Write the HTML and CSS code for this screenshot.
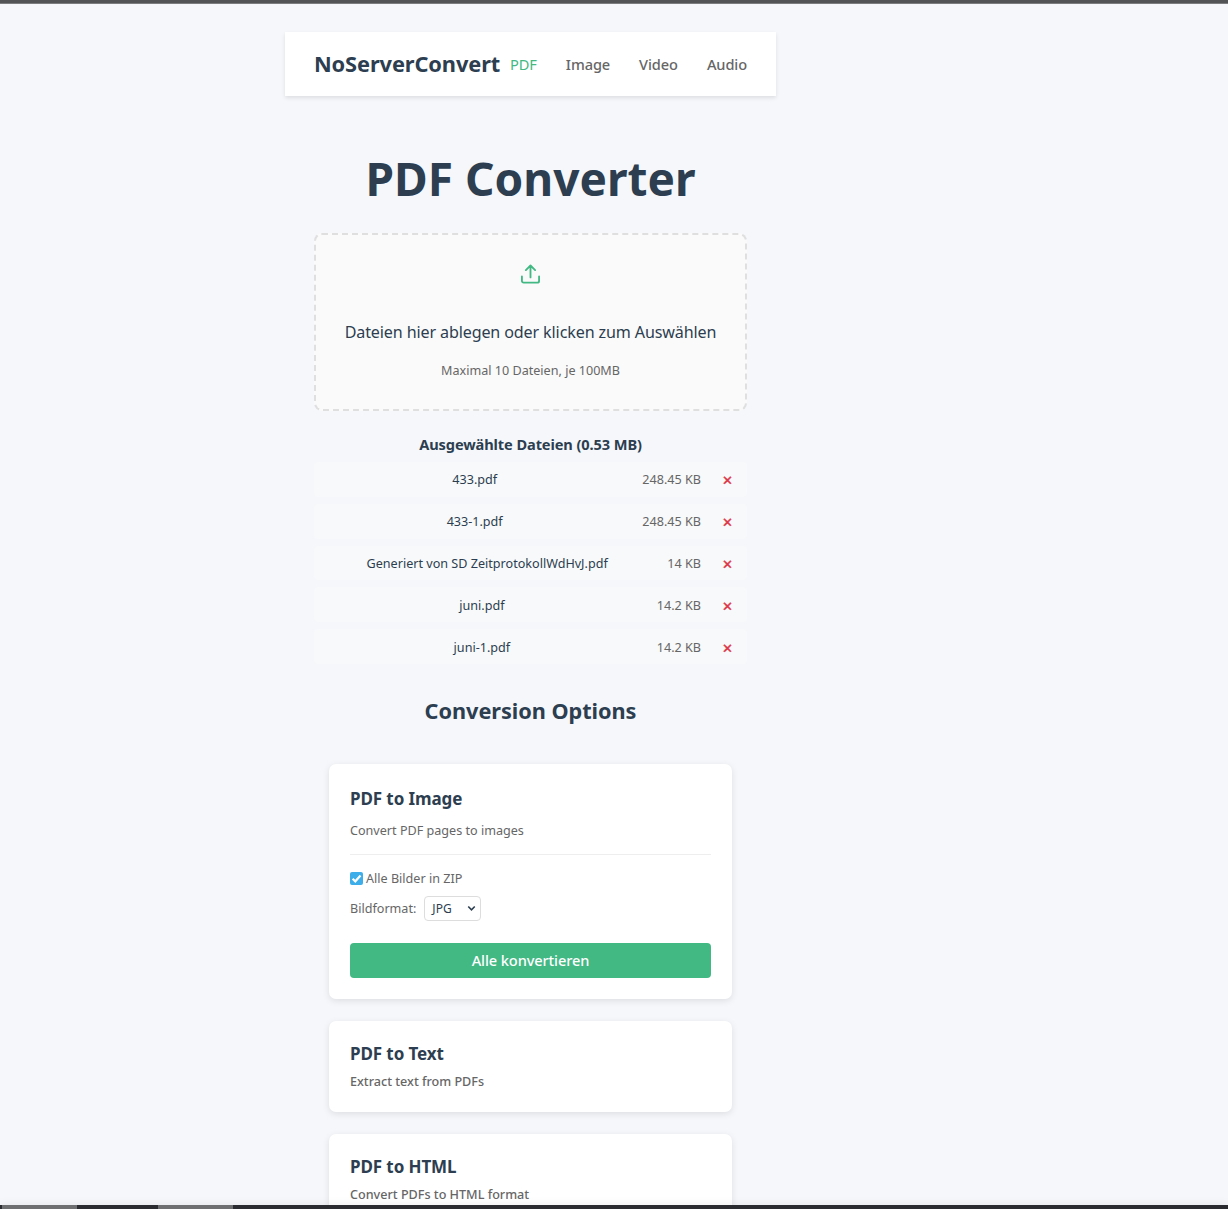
FILE: index.html
```html
<!DOCTYPE html>
<html lang="de">
<head>
<meta charset="utf-8">
<title>NoServerConvert</title>
<link rel="stylesheet" href="styles.css">
</head>
<body>
<div class="window-edge"></div>
<div class="app">
  <header class="navbar">
    <div class="brand">NoServerConvert</div>
    <nav class="links">
      <a class="link active">PDF</a>
      <a class="link">Image</a>
      <a class="link">Video</a>
      <a class="link">Audio</a>
    </nav>
  </header>
  <main class="content">
    <h1 class="title">PDF Converter</h1>
    <section class="dropzone">
      <svg class="upload" viewBox="0 0 24 24" fill="none" stroke="currentColor" stroke-width="2.1" stroke-linecap="round" stroke-linejoin="round"><path d="M2.2 14.3v5a2 2 0 0 0 2 2h15.6a2 2 0 0 0 2-2v-5"/><path d="M6.7 6.9 12 1.7l5.3 5.2M12 2.1v13.2"/></svg>
      <p class="drop-text">Dateien hier ablegen oder klicken zum Auswählen</p>
      <p class="drop-hint">Maximal 10 Dateien, je 100MB</p>
    </section>
    <h3 class="files-title">Ausgewählte Dateien (0.53 MB)</h3>
    <ul class="files">
      <li class="file"><span class="name">433.pdf</span><span class="size">248.45 KB</span><button class="remove">✕</button></li>
      <li class="file"><span class="name">433-1.pdf</span><span class="size">248.45 KB</span><button class="remove">✕</button></li>
      <li class="file"><span class="name">Generiert von SD ZeitprotokollWdHvJ.pdf</span><span class="size">14 KB</span><button class="remove">✕</button></li>
      <li class="file"><span class="name">juni.pdf</span><span class="size">14.2 KB</span><button class="remove">✕</button></li>
      <li class="file"><span class="name">juni-1.pdf</span><span class="size">14.2 KB</span><button class="remove">✕</button></li>
    </ul>
    <h2 class="options-title">Conversion Options</h2>
    <div class="cards">
      <article class="card card-open">
        <h3 class="card-title">PDF to Image</h3>
        <p class="card-desc">Convert PDF pages to images</p>
        <div class="settings">
          <label class="check-row">
            <span class="check"><svg viewBox="0 0 12 12" fill="none" stroke="#fff" stroke-width="2"><path d="M2.4 6.2 4.9 8.6 9.7 3.2"/></svg></span>
            Alle Bilder in ZIP
          </label>
          <label class="format-row">Bildformat:
            <span class="select">JPG<svg viewBox="0 0 10 8" fill="none" stroke="currentColor" stroke-width="1.8"><path d="M1.3 1.8 5 5.6 8.7 1.8"/></svg></span>
          </label>
          <button class="convert">Alle konvertieren</button>
        </div>
      </article>
      <article class="card">
        <h3 class="card-title">PDF to Text</h3>
        <p class="card-desc">Extract text from PDFs</p>
      </article>
      <article class="card">
        <h3 class="card-title">PDF to HTML</h3>
        <p class="card-desc">Convert PDFs to HTML format</p>
      </article>
    </div>
  </main>
</div>
<footer class="taskbar"><span class="task"></span><span class="task"></span></footer>
</body>
</html>
```
FILE: styles.css
```css
* { box-sizing: border-box; }
html, body { height: 100%; }
body {
  margin: 0;
  overflow: hidden;
  position: relative;
  background: #f5f7fb;
  color: #2c3e50;
  font-family: "Noto Sans", sans-serif;
}
h1, h2, h3, p, ul { margin: 0; padding: 0; }
button { font-family: inherit; border: 0; }
.window-edge { height: 4px; background: #535455; border-bottom: 1px solid #7c7d7f; }
.app { width: 491px; margin: 28px 0 0 285px; }
.navbar {
  height: 64px;
  padding: 0 29px 1px;
  display: flex;
  align-items: center;
  justify-content: space-between;
  background: #fff;
  box-shadow: 0 2px 4px rgba(0, 0, 0, .1);
}
.brand { font-size: 21.8px; letter-spacing: -.11px; font-weight: 700; }
.links { display: flex; gap: 29px; }
.link { font-size: 14.6px; letter-spacing: -.1px; font-weight: 500; color: #666; }
.link.active { color: #42b883; font-weight: 400; }
.content { padding: 0 29px; text-align: center; }
.title { margin-top: 49px; font-size: 46px; line-height: 66px; font-weight: 700; }
.dropzone {
  margin-top: 22px;
  height: 178px;
  padding-top: 29px;
  border: 2px dashed #dfdfdf;
  border-radius: 8px;
  background: #fafafa;
}
.upload { display: block; width: 21px; height: 21px; margin: 0 auto; color: #42b883; }
.drop-text { margin-top: 35px; font-size: 16.1px; letter-spacing: -.13px; line-height: 25px; white-space: nowrap; }
.drop-hint { margin-top: 15px; font-size: 12.6px; line-height: 22px; color: #666; }
.files-title { margin-top: 21px; font-size: 14.6px; letter-spacing: -.1px; line-height: 24px; font-weight: 700; }
.files { margin-top: 6px; list-style: none; display: flex; flex-direction: column; gap: 7px; }
.file {
  height: 34.8px;
  padding: 1px 14px 0;
  display: flex;
  align-items: center;
  background: #f8f9fa;
  border-radius: 4px;
  font-size: 12.6px;
}
.name { flex: 1; margin-right: 21px; }
.size { margin-right: 7px; color: #666; }
.remove { width: 25px; padding: 3px 0 0 13px; background: none; color: #dc3545; font-size: 12.6px; line-height: 18px; -webkit-text-stroke: .4px currentColor; }
.options-title { margin-top: 30px; font-size: 21.7px; letter-spacing: -.04px; line-height: 34px; font-weight: 700; }
.cards { margin-top: 36px; padding: 0 15px; display: flex; flex-direction: column; gap: 22px; text-align: left; }
.card {
  height: 91px;
  padding: 20px 21px 0;
  background: #fff;
  border-radius: 7px;
  box-shadow: 0 2px 7px rgba(0, 0, 0, .1);
}
.card-open { height: 235px; padding-top: 22px; }
.card-title { font-size: 17px; letter-spacing: -.1px; line-height: 26px; font-weight: 700; }
.card-desc { margin-top: 4px; font-size: 12.6px; line-height: 22px; font-weight: 500; color: #666; }
.card-open .card-desc { margin-top: 8px; font-weight: 400; }
.settings { margin-top: 12px; border-top: 1px solid #eee; font-size: 12.6px; color: #666; }
.check-row { display: flex; align-items: center; gap: 3px; margin-top: 13px; height: 22px; }
.check { width: 13px; height: 13px; border-radius: 2px; background: #3daee9; display: flex; }
.format-row { display: flex; align-items: center; gap: 8px; margin-top: 6px; height: 26px; }
.select {
  width: 57px;
  height: 25px;
  padding: 0 4px 0 7px;
  display: flex;
  align-items: center;
  justify-content: space-between;
  border: 1px solid #ddd;
  border-radius: 4px;
  color: #2c3e50;
  font-size: 12px;
}
.select svg { width: 9px; height: 7px; }
.convert {
  display: block;
  width: 100%;
  height: 35px;
  margin-top: 21px;
  padding: 0;
  border-radius: 4px;
  background: #42b883;
  color: #fff;
  font-size: 14.6px;
  letter-spacing: -.1px;
  font-weight: 500;
}
.taskbar {
  position: absolute;
  left: 0;
  right: 0;
  bottom: 0;
  height: 4px;
  padding-left: 2px;
  display: flex;
  gap: 81px;
  background: #2a2b31;
  box-shadow: 0 0 9px rgba(0, 0, 0, .12);
}
.task { width: 75px; background: #6c6e70; }
```
